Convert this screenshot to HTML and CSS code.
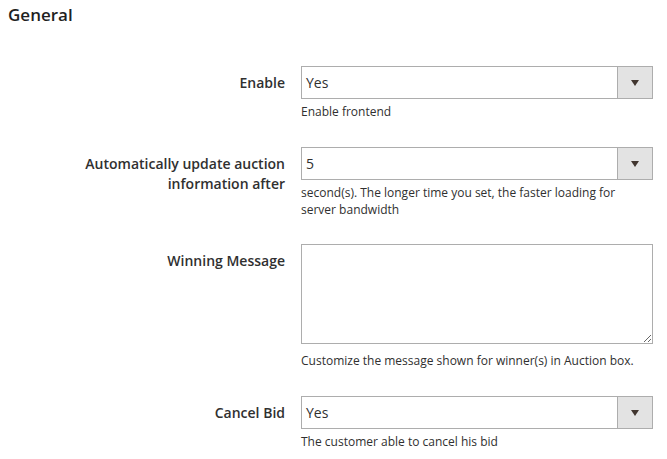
FILE: index.html
```html
<!DOCTYPE html>
<html>
<head>
<meta charset="utf-8">
<link rel="stylesheet" href="styles.css">
</head>
<body>
<div class="page">
  <h2 class="section-title">General</h2>
  <div class="fieldset">
    <div class="row">
      <div class="label">Enable</div>
      <div class="control">
        <div class="select"><span class="select-value">Yes</span><span class="select-arrow"><span class="tri"></span></span></div>
        <div class="note">Enable frontend</div>
      </div>
    </div>
    <div class="row row-tight">
      <div class="label">Automatically update auction information after</div>
      <div class="control">
        <div class="select"><span class="select-value">5</span><span class="select-arrow"><span class="tri"></span></span></div>
        <div class="note">second(s). The longer time you set, the faster loading for server bandwidth</div>
      </div>
    </div>
    <div class="row">
      <div class="label">Winning Message</div>
      <div class="control">
        <textarea class="textarea"></textarea>
        <div class="note note-area">Customize the message shown for winner(s) in Auction box.</div>
      </div>
    </div>
    <div class="row">
      <div class="label">Cancel Bid</div>
      <div class="control">
        <div class="select"><span class="select-value">Yes</span><span class="select-arrow"><span class="tri"></span></span></div>
        <div class="note">The customer able to cancel his bid</div>
      </div>
    </div>
  </div>
</div>
</body>
</html>
```
FILE: styles.css
```css
html, body {
  margin: 0;
  padding: 0;
  background: #ffffff;
}
body {
  font-family: "Open Sans", "Liberation Sans", sans-serif;
  color: #303030;
}
.page {
  width: 667px;
  height: 459px;
  overflow: hidden;
}
.section-title {
  margin: 0;
  padding: 3px 8px 0;
  font-size: 17px;
  line-height: 24px;
  font-weight: 600;
  color: #1f1f1f;
}
.fieldset {
  padding-top: 39px;
}
.row {
  display: grid;
  grid-template-columns: 285px 352px;
  column-gap: 16px;
  margin-bottom: 27px;
}
.row-tight {
  margin-bottom: 26px;
}
.label {
  text-align: right;
  font-size: 14px;
  font-weight: 600;
  line-height: 19.5px;
  padding-top: 7px;
  color: #303030;
  padding-left: 70px;
}
.control {
  display: flex;
  flex-direction: column;
}
.select {
  display: flex;
  height: 33px;
  box-sizing: border-box;
  border: 1px solid #adadad;
  background: #fff;
}
.select-value {
  flex: 1;
  font-size: 14px;
  line-height: 31px;
  padding-left: 4px;
  color: #303030;
}
.select-arrow {
  width: 34px;
  background: #e3e3e3;
  border-left: 1px solid #adadad;
  display: flex;
  align-items: center;
  justify-content: center;
}
.tri {
  width: 0;
  height: 0;
  border-left: 4.5px solid transparent;
  border-right: 4.5px solid transparent;
  border-top: 6px solid #41362f;
}
.textarea {
  display: block;
  width: 352px;
  height: 100px;
  box-sizing: border-box;
  margin: 0;
  border: 1px solid #adadad;
  border-radius: 0;
  resize: vertical;
  font-family: inherit;
  font-size: 14px;
  padding: 4px;
  outline: none;
}
.note {
  font-size: 12px;
  line-height: 17px;
  margin-top: 4px;
  color: #303030;
}
.note-area {
  margin-top: 8px;
}
```
